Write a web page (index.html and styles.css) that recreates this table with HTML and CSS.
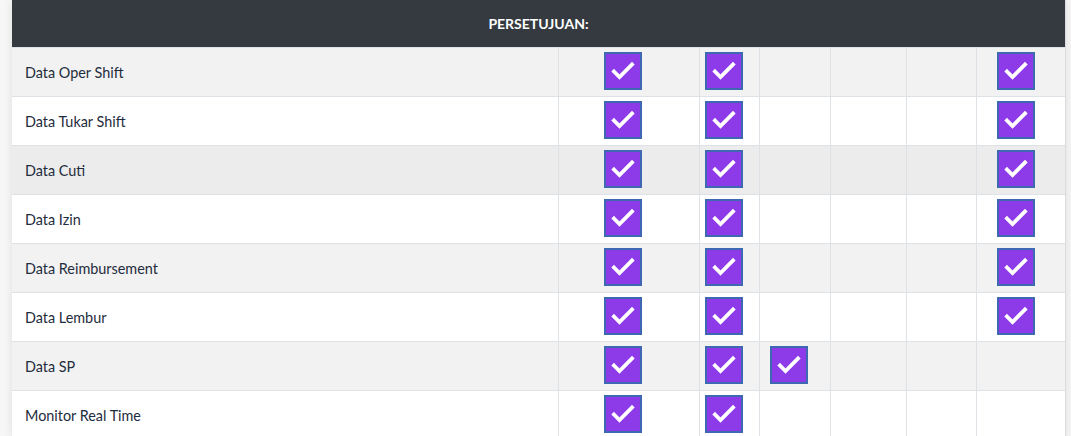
FILE: index.html
```html
<!DOCTYPE html>
<html lang="id">
<head>
<meta charset="utf-8">
<title>Persetujuan</title>
<link rel="stylesheet" href="styles.css">
</head>
<body>
<div class="page">
  <div class="card">
    <div class="head">PERSETUJUAN:</div>
    <div class="row odd">
      <div class="label">Data Oper Shift</div>
      <div class="cell c1"><span class="chk"><svg viewBox="0 0 34 34"><polyline points="8,17.5 13.5,23 26,10.5"/></svg></span></div>
      <div class="cell c2"><span class="chk"><svg viewBox="0 0 34 34"><polyline points="8,17.5 13.5,23 26,10.5"/></svg></span></div>
      <div class="cell c3"></div>
      <div class="cell c4"></div>
      <div class="cell c5"></div>
      <div class="cell c6"><span class="chk"><svg viewBox="0 0 34 34"><polyline points="8,17.5 13.5,23 26,10.5"/></svg></span></div>
    </div>
    <div class="row">
      <div class="label">Data Tukar Shift</div>
      <div class="cell c1"><span class="chk"><svg viewBox="0 0 34 34"><polyline points="8,17.5 13.5,23 26,10.5"/></svg></span></div>
      <div class="cell c2"><span class="chk"><svg viewBox="0 0 34 34"><polyline points="8,17.5 13.5,23 26,10.5"/></svg></span></div>
      <div class="cell c3"></div>
      <div class="cell c4"></div>
      <div class="cell c5"></div>
      <div class="cell c6"><span class="chk"><svg viewBox="0 0 34 34"><polyline points="8,17.5 13.5,23 26,10.5"/></svg></span></div>
    </div>
    <div class="row hover">
      <div class="label">Data Cuti</div>
      <div class="cell c1"><span class="chk"><svg viewBox="0 0 34 34"><polyline points="8,17.5 13.5,23 26,10.5"/></svg></span></div>
      <div class="cell c2"><span class="chk"><svg viewBox="0 0 34 34"><polyline points="8,17.5 13.5,23 26,10.5"/></svg></span></div>
      <div class="cell c3"></div>
      <div class="cell c4"></div>
      <div class="cell c5"></div>
      <div class="cell c6"><span class="chk"><svg viewBox="0 0 34 34"><polyline points="8,17.5 13.5,23 26,10.5"/></svg></span></div>
    </div>
    <div class="row">
      <div class="label">Data Izin</div>
      <div class="cell c1"><span class="chk"><svg viewBox="0 0 34 34"><polyline points="8,17.5 13.5,23 26,10.5"/></svg></span></div>
      <div class="cell c2"><span class="chk"><svg viewBox="0 0 34 34"><polyline points="8,17.5 13.5,23 26,10.5"/></svg></span></div>
      <div class="cell c3"></div>
      <div class="cell c4"></div>
      <div class="cell c5"></div>
      <div class="cell c6"><span class="chk"><svg viewBox="0 0 34 34"><polyline points="8,17.5 13.5,23 26,10.5"/></svg></span></div>
    </div>
    <div class="row odd">
      <div class="label">Data Reimbursement</div>
      <div class="cell c1"><span class="chk"><svg viewBox="0 0 34 34"><polyline points="8,17.5 13.5,23 26,10.5"/></svg></span></div>
      <div class="cell c2"><span class="chk"><svg viewBox="0 0 34 34"><polyline points="8,17.5 13.5,23 26,10.5"/></svg></span></div>
      <div class="cell c3"></div>
      <div class="cell c4"></div>
      <div class="cell c5"></div>
      <div class="cell c6"><span class="chk"><svg viewBox="0 0 34 34"><polyline points="8,17.5 13.5,23 26,10.5"/></svg></span></div>
    </div>
    <div class="row">
      <div class="label">Data Lembur</div>
      <div class="cell c1"><span class="chk"><svg viewBox="0 0 34 34"><polyline points="8,17.5 13.5,23 26,10.5"/></svg></span></div>
      <div class="cell c2"><span class="chk"><svg viewBox="0 0 34 34"><polyline points="8,17.5 13.5,23 26,10.5"/></svg></span></div>
      <div class="cell c3"></div>
      <div class="cell c4"></div>
      <div class="cell c5"></div>
      <div class="cell c6"><span class="chk"><svg viewBox="0 0 34 34"><polyline points="8,17.5 13.5,23 26,10.5"/></svg></span></div>
    </div>
    <div class="row odd">
      <div class="label">Data SP</div>
      <div class="cell c1"><span class="chk"><svg viewBox="0 0 34 34"><polyline points="8,17.5 13.5,23 26,10.5"/></svg></span></div>
      <div class="cell c2"><span class="chk"><svg viewBox="0 0 34 34"><polyline points="8,17.5 13.5,23 26,10.5"/></svg></span></div>
      <div class="cell c3"><span class="chk"><svg viewBox="0 0 34 34"><polyline points="8,17.5 13.5,23 26,10.5"/></svg></span></div>
      <div class="cell c4"></div>
      <div class="cell c5"></div>
      <div class="cell c6"></div>
    </div>
    <div class="row">
      <div class="label">Monitor Real Time</div>
      <div class="cell c1"><span class="chk"><svg viewBox="0 0 34 34"><polyline points="8,17.5 13.5,23 26,10.5"/></svg></span></div>
      <div class="cell c2"><span class="chk"><svg viewBox="0 0 34 34"><polyline points="8,17.5 13.5,23 26,10.5"/></svg></span></div>
      <div class="cell c3"></div>
      <div class="cell c4"></div>
      <div class="cell c5"></div>
      <div class="cell c6"></div>
    </div>
  </div>
</div>
</body>
</html>
```
FILE: styles.css
```css
html, body {
  margin: 0;
  padding: 0;
}
body {
  background: #f7f7f7;
  font-family: "Lato", "Open Sans", sans-serif;
  font-size: 14.4px;
  color: #1f2d3d;
  height: 436px;
  overflow: hidden;
}
.page {
  padding: 0 6px 0 12px;
}
.card {
  width: 1053px;
  background: #fff;
  box-shadow: 0 0 10px rgba(0, 0, 0, 0.10);
  border-right: 1px solid #dcdcdc;
}
.head {
  height: 47px;
  background: #343a40;
  color: #fff;
  font-size: 14px;
  font-weight: 700;
  display: flex;
  align-items: center;
  justify-content: center;
  padding-bottom: 1px;
  box-sizing: border-box;
}
.row {
  display: grid;
  grid-template-columns: 546px 141px 60px 71px 76px 70px 89px;
  border-top: 1px solid #dee2e6;
  height: 49px;
  box-sizing: border-box;
  background: #fff;
}
.row.odd {
  background: #f2f2f2;
}
.row.hover {
  background: #ececec;
}
.label {
  display: flex;
  align-items: center;
  padding-left: 13px;
}
.cell {
  border-left: 1px solid #dee2e6;
  padding-top: 4px;
}
.c1 { padding-left: 45px; }
.c2 { padding-left: 5px; }
.c3 { padding-left: 10px; }
.c6 { padding-left: 20px; }
.chk {
  display: block;
  width: 38px;
  height: 38px;
  box-sizing: border-box;
  border: 2px solid #3f68b2;
  background: #8d3ae9;
}
.chk svg {
  display: block;
  width: 34px;
  height: 34px;
  fill: none;
  stroke: #fff;
  stroke-width: 3.8;
  stroke-linecap: square;
  stroke-linejoin: miter;
}
```
